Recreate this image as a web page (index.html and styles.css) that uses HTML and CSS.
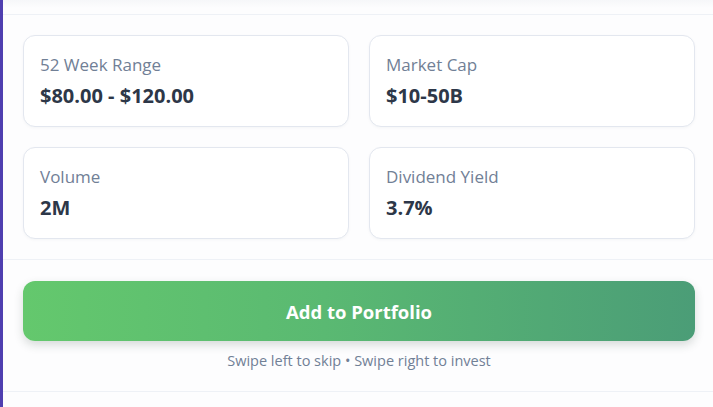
FILE: index.html
```html
<!DOCTYPE html>
<html lang="en">
<head>
<meta charset="utf-8">
<title>Stock card</title>
<link rel="stylesheet" href="styles.css">
</head>
<body>
<div class="panel">
  <div class="top-strip"></div>
  <section class="stats">
    <div class="stat">
      <div class="stat-label">52 Week Range</div>
      <div class="stat-value">$80.00 - $120.00</div>
    </div>
    <div class="stat">
      <div class="stat-label">Market Cap</div>
      <div class="stat-value">$10-50B</div>
    </div>
    <div class="stat">
      <div class="stat-label">Volume</div>
      <div class="stat-value">2M</div>
    </div>
    <div class="stat">
      <div class="stat-label">Dividend Yield</div>
      <div class="stat-value">3.7%</div>
    </div>
  </section>
  <section class="actions">
    <button class="add-btn">Add to Portfolio</button>
    <p class="hint">Swipe left to skip • Swipe right to invest</p>
  </section>
  <div class="bottom"></div>
</div>
</body>
</html>
```

FILE: styles.css
```css
html, body {
  margin: 0;
  padding: 0;
  background: #ffffff;
}
body {
  font-family: "Open Sans", "Noto Sans", sans-serif;
  height: 407px;
  overflow: hidden;
}
.panel {
  border-left: 3px solid #4f3fb0;
  background: #fdfdfe;
  height: 407px;
  box-sizing: border-box;
}
.top-strip {
  height: 14px;
  border-bottom: 1px solid #eef1f6;
  background: linear-gradient(#f6f7f9, #fdfdfe 8px);
}
.stats {
  display: grid;
  grid-template-columns: 1fr 1fr;
  gap: 20px;
  padding: 20px 18px 20px 20px;
  border-bottom: 1px solid #eef1f6;
}
.stat {
  height: 92px;
  box-sizing: border-box;
  background: #ffffff;
  border: 1px solid #e3e7ef;
  border-radius: 12px;
  padding: 16px 16px;
  box-shadow: 0 1px 3px rgba(30, 40, 80, 0.04);
}
.stat-label {
  font-size: 17px;
  line-height: 26px;
  color: #718096;
}
.stat-value {
  margin-top: 5px;
  font-size: 20px;
  line-height: 26px;
  font-weight: 700;
  color: #2d3748;
}
.actions {
  padding: 21px 18px 20px 20px;
  border-bottom: 1px solid #eef1f6;
  text-align: center;
}
.add-btn {
  display: block;
  width: 100%;
  height: 60px;
  border: none;
  border-radius: 12px;
  background: linear-gradient(90deg, #64c86d 0%, #5ab972 45%, #4b9d77 100%);
  color: #ffffff;
  font-family: inherit;
  font-size: 18.5px;
  font-weight: 700;
  box-shadow: 0 4px 10px rgba(40, 60, 50, 0.18);
  cursor: pointer;
}
.hint {
  margin: 10px 0 0;
  font-size: 14.5px;
  line-height: 20px;
  color: #718096;
}
```
